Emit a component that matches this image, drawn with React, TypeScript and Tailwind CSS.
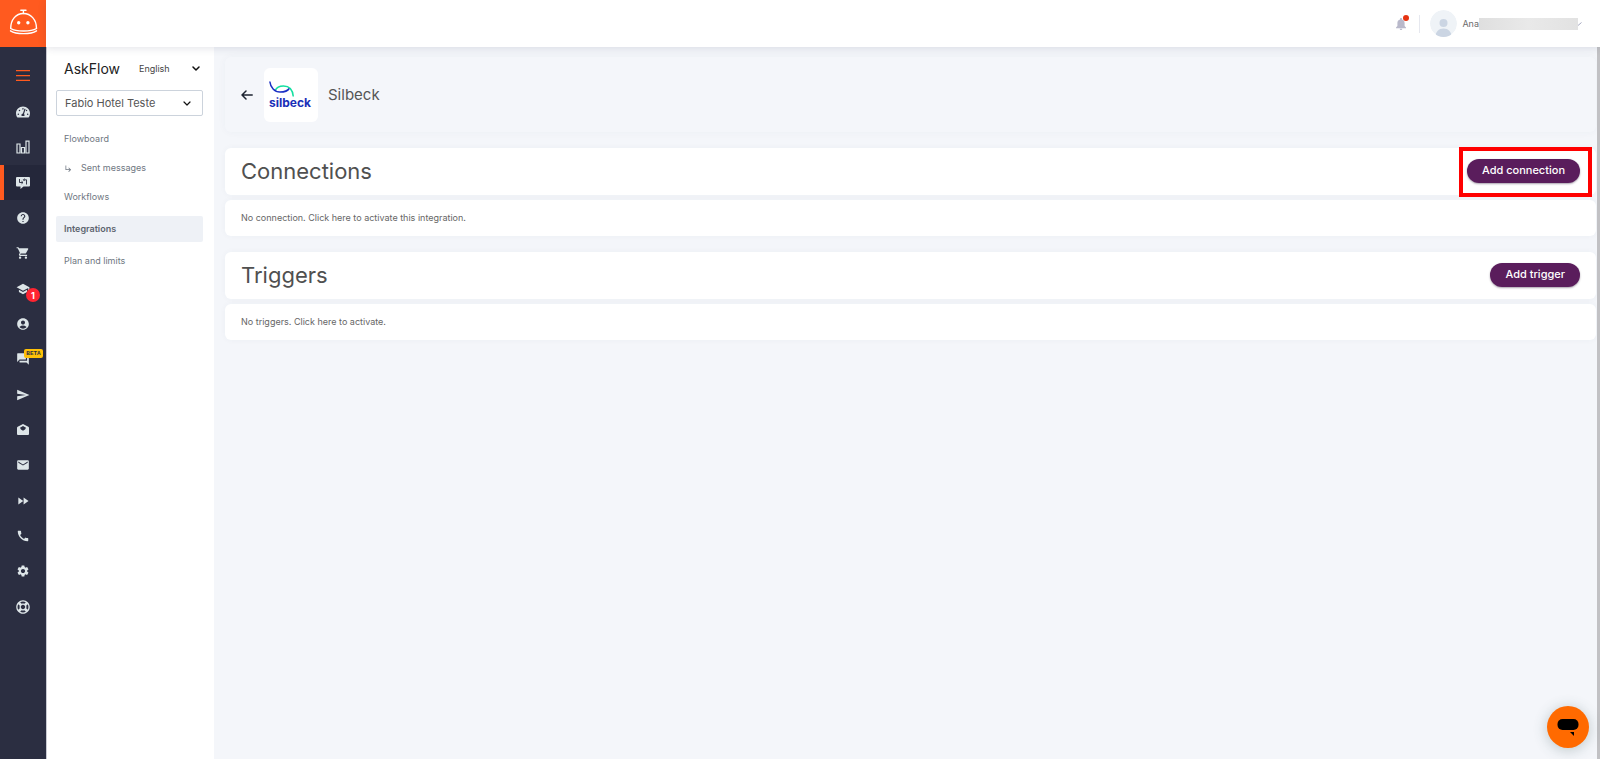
import React from "react";
import { FaTachometerAlt, FaRegLifeRing } from "react-icons/fa";
import {
  MdHelp,
  MdShoppingCart,
  MdSchool,
  MdAccountCircle,
  MdForum,
  MdSend,
  MdEmail,
  MdFastForward,
  MdCall,
  MdSettings,
  MdSubdirectoryArrowRight,
} from "react-icons/md";

function BellhopLogo() {
  return (
    <svg viewBox="0 0 46 46" className="size-[46px]" fill="none" stroke="#fff" strokeWidth="1.4" strokeLinecap="round">
      <path d="M20.800 10.200h5.200M23.400 10.500v3" />
      <path d="M10.700 28.500C10.700 19.500 16 13.500 23.400 13.500S36.500 19.500 36.500 28.500C31 31.800 16 31.800 10.700 28.500z" />
      <path d="M10.500 30.800c5.500 3.700 20.500 3.700 26 0" />
      <circle cx="18.700" cy="22.800" r="1.700" fill="#fff" stroke="none" />
      <circle cx="27.900" cy="22.800" r="1.700" fill="#fff" stroke="none" />
    </svg>
  );
}

function BarsIcon() {
  return (
    <svg viewBox="0 0 14 14" className="size-3.5" fill="none" stroke="currentColor" strokeWidth="1.200">
      <path d="M1 4h3v9H1zM5.500 7.500h3V13h-3zM10 1.200h3V13h-3z" />
    </svg>
  );
}

function FlowIcon() {
  return (
    <svg viewBox="0 0 14 12" className="h-3 w-3.5">
      <path d="M1 0h12a1 1 0 0 1 1 1v7.500a1 1 0 0 1-1 1H7.500L4.500 12V9.500H1a1 1 0 0 1-1-1V1a1 1 0 0 1 1-1z" fill="currentColor" />
      <path d="M3.500 2v3.500h3.200M5.500 4.200l1.500 1.300-1.500 1.300M7.500 2.800h3V7.500M8.600 1.700L7.400 2.800l1.200 1.200" fill="none" stroke="#24273a" strokeWidth="0.900" />
    </svg>
  );
}

function OpenMailIcon() {
  return (
    <svg viewBox="0 0 12 11" className="h-[11px] w-3">
      <path d="M6 0l5.300 2.700c.400.200.700.600.700 1.100V10a1 1 0 0 1-1 1H1a1 1 0 0 1-1-1V3.800c0-.500.300-.900.700-1.100z" fill="currentColor" />
      <path d="M6 1.900L9 3.700 8 5.500 6 6.700 4 5.500 3 3.700z" fill="#2b2e41" />
    </svg>
  );
}

function Chevron({ className }: { className: string }) {
  return (
    <svg viewBox="0 0 8 5" className={className} fill="none" stroke="#111" strokeLinecap="round" strokeLinejoin="round">
      <path d="M1 1l3 3 3-3" />
    </svg>
  );
}

type RailItem = { label: string; icon: React.ReactNode; active?: boolean; badge?: "count" | "beta" };

const railGroups: RailItem[][] = [
  [
    { label: "Dashboard", icon: <FaTachometerAlt className="size-3.5" /> },
    { label: "Reports", icon: <BarsIcon /> },
  ],
  [
    { label: "AskFlow", icon: <FlowIcon />, active: true },
    { label: "Questions", icon: <MdHelp className="size-3.5" /> },
    { label: "Store", icon: <MdShoppingCart className="size-3.5" /> },
  ],
  [
    { label: "Academy", icon: <MdSchool className="size-3.5" />, badge: "count" },
    { label: "Account", icon: <MdAccountCircle className="size-3.5" /> },
    { label: "Chat", icon: <MdForum className="size-3.5" />, badge: "beta" },
  ],
  [
    { label: "Send", icon: <MdSend className="size-3.5" /> },
    { label: "Read mail", icon: <OpenMailIcon /> },
    { label: "Mail", icon: <MdEmail className="size-3.5" /> },
  ],
  [
    { label: "Automation", icon: <MdFastForward className="size-3.5" /> },
    { label: "Calls", icon: <MdCall className="size-3.5" /> },
    { label: "Settings", icon: <MdSettings className="size-3.5" /> },
  ],
  [{ label: "Support", icon: <FaRegLifeRing className="size-3.5" /> }],
];

function Rail() {
  return (
    <aside className="flex w-[46px] shrink-0 flex-col bg-[#2b2e41]">
      <a href="#home" aria-label="Home" className="block h-[47px] bg-[#ff5a1f]">
        <BellhopLogo />
      </a>
      <button aria-label="Menu" className="flex h-[47px] items-center justify-center pt-2.5">
        <svg viewBox="0 0 14 11" className="h-[11px] w-3.5" fill="#ff5a1f">
          <path d="M0 0h14v1.300H0zM0 4.900h14v1.300H0zM0 9.700h14V11H0z" />
        </svg>
      </button>
      <nav className="flex flex-col gap-px text-[#dde5e8]">
        {railGroups.map((group, i) => (
          <div key={i}>
            {group.map((item) => (
              <a
                key={item.label}
                href={"#" + item.label.toLowerCase().replace(" ", "-")}
                aria-label={item.label}
                className={
                  item.active
                    ? "relative flex h-[35px] items-center justify-center border-l-4 border-[#ff5a1f] bg-[#24273a] pr-1"
                    : "relative flex h-[35px] items-center justify-center"
                }
              >
                {item.icon}
                {item.badge === "count" && (
                  <span className="absolute top-[17px] left-[26px] flex size-3.5 items-center justify-center rounded-full bg-[#ff2431] text-[9px] leading-none font-bold text-white">
                    1
                  </span>
                )}
                {item.badge === "beta" && (
                  <span className="absolute top-2 left-6 flex h-[9px] w-[19px] items-center justify-center rounded-xs bg-[#ffc107] font-['Liberation_Mono',monospace] text-[6px] leading-none font-bold text-[#2b2e41]">
                    BETA
                  </span>
                )}
              </a>
            ))}
          </div>
        ))}
      </nav>
    </aside>
  );
}

function TopBar() {
  return (
    <header className="relative z-10 flex h-[47px] shrink-0 items-center justify-end bg-white pr-[18px] shadow-[0_1px_8px_rgba(40,50,80,0.14)]">
      <button aria-label="Notifications" className="relative flex size-4 items-center justify-center">
        <svg viewBox="0 0 10 12" className="h-3 w-2.5" fill="#b9b9cb">
          <path d="M5 0c.600 0 1 .400 1 1v.500C7.700 2 8.600 3.300 8.600 5v3L10 9.500v.700H0v-.700L1.400 8V5C1.400 3.300 2.300 2 4 1.500V1c0-.600.400-1 1-1zM3.700 10.700h2.600C6.300 11.500 5.700 12 5 12s-1.300-.500-1.300-1.300z" />
        </svg>
        <span className="absolute -top-px right-0 size-1.5 rounded-full bg-[#e63312]" />
      </button>
      <span className="mr-2.5 ml-2.5 h-[18px] w-px bg-[#e6e8ef]" />
      <svg viewBox="0 0 27 27" className="size-[27px] overflow-hidden rounded-full">
        <circle cx="13.500" cy="13.500" r="13.500" fill="#eff3f7" />
        <circle cx="13.500" cy="13" r="4" fill="#cbd5e3" />
        <path d="M5.500 27c0-5.500 3.300-8.500 8-8.500s8 3 8 8.500z" fill="#cbd5e3" />
      </svg>
      <span className="ml-[5px] text-[9px] text-[#6b6b6b]">Ana</span>
      <span className="h-3 w-[99px] bg-linear-to-r from-[#dfdfdf] via-[#e9e9e9] to-[#e2e2e2]" />
      <svg viewBox="0 0 4 4" className="size-1" fill="none" stroke="#a6a8c0">
        <path d="M0 3.500L3.500.500" />
      </svg>
    </header>
  );
}

function SidePanel() {
  const link = "flex items-center px-2 text-[9px] leading-[14px] text-[#6f7782]";
  return (
    <aside className="flex w-[168px] shrink-0 flex-col border-l border-[#c9cad2] bg-white pr-[11px] pl-[9px]">
      <div className="flex h-[43px] items-center justify-between pr-[3px] pl-2">
        <h1 className="text-[14px] text-[#222]">AskFlow</h1>
        <div className="relative flex items-center">
          <select aria-label="Language" className="w-[61px] appearance-none bg-transparent text-[9px] text-[#444]">
            <option>English</option>
          </select>
          <Chevron className="pointer-events-none absolute right-0 h-[5px] w-2 stroke-[1.5]" />
        </div>
      </div>
      <div className="relative flex items-center">
        <select
          aria-label="Hotel"
          className="h-[26px] w-full appearance-none rounded-xs border border-[#ccd3dc] bg-white px-2 text-[11px] text-[#555]"
        >
          <option>Fabio Hotel Teste</option>
        </select>
        <Chevron className="pointer-events-none absolute right-3 h-[5px] w-2 stroke-[1.2]" />
      </div>
      <nav className="mt-4 flex flex-col">
        <a href="#flowboard" className={link}>Flowboard</a>
        <a href="#sent" className={link + " mt-[15px] gap-2"}>
          <MdSubdirectoryArrowRight className="size-[9px]" />
          Sent messages
        </a>
        <a href="#workflows" className={link + " mt-[15px]"}>Workflows</a>
        <a
          href="#integrations"
          aria-current="page"
          className="mt-3 flex h-[26px] items-center rounded-xs bg-[#eef1f6] px-2 text-[9px] font-semibold text-[#5d6570]"
        >
          Integrations
        </a>
        <a href="#plan" className={link + " mt-3"}>Plan and limits</a>
      </nav>
    </aside>
  );
}

function SilbeckLogo() {
  return (
    <div className="flex size-[54px] flex-col justify-center rounded-md bg-white pl-[5px]">
      <svg viewBox="0 0 26 16" className="h-4 w-[26px]" fill="none" strokeWidth="1.500">
        <path d="M6.300 9.500C7.500 6.500 11 5 14.500 5c5.500 0 9.200 3.500 9.800 10.500" stroke="#14e0a0" />
        <path d="M.800.500C1.500 6.500 5.500 11 11 11c4.500 0 8-1.500 9.200-3.500" stroke="#1a2fc4" />
      </svg>
      <span className="text-[12px] leading-3 font-bold text-[#1a2fb8]">silbeck</span>
    </div>
  );
}

const pill =
  "h-6 rounded-full bg-[#5a1d5c] px-[15px] text-[11px] font-medium text-white shadow-[0_1px_2px_rgba(40,20,50,0.4)]";

function Section(props: { title: string; action: string; message: string; highlighted?: boolean }) {
  return (
    <section className="mt-4 flex flex-col gap-[5px]">
      <div className="flex h-[47px] items-center justify-between rounded-md bg-white px-4 pb-0.5 shadow-[0_0_6px_rgba(60,70,110,0.04)]">
        <h2 className="text-[22px] leading-7 text-[#505050]">{props.title}</h2>
        <div className="relative flex">
          <button className={pill}>{props.action}</button>
          {props.highlighted && (
            <span className="pointer-events-none absolute -top-3 -right-3 -bottom-3.5 -left-2 border-4 border-[#ff0000]" />
          )}
        </div>
      </div>
      <p className="flex h-9 items-center rounded-md bg-white px-4 text-[9px] text-[#666] shadow-[0_0_6px_rgba(60,70,110,0.04)]">
        {props.message}
      </p>
    </section>
  );
}

export default function App() {
  return (
    <div className="flex min-h-screen bg-[#f4f6fa] font-[Inter,sans-serif]">
      <Rail />
      <div className="flex min-w-0 flex-1 flex-col">
        <TopBar />
        <div className="flex flex-1">
          <SidePanel />
          <main className="min-w-0 flex-1 pt-2.5 pr-px pl-[11px]">
            <div className="flex h-[75px] items-center rounded-md px-4 shadow-[0_0_8px_rgba(60,70,110,0.04)]">
              <button aria-label="Back">
                <svg viewBox="0 0 12 10" className="h-2.5 w-3" fill="none" stroke="#1c2330" strokeWidth="1.500" strokeLinecap="round" strokeLinejoin="round">
                  <path d="M11.200 5H1M5 1L1 5l4 4" />
                </svg>
              </button>
              <div className="mr-2.5 ml-[11px]">
                <SilbeckLogo />
              </div>
              <span className="text-[15px] leading-5 text-[#555]">Silbeck</span>
            </div>
            <Section title="Connections" action="Add connection" message="No connection. Click here to activate this integration." highlighted />
            <Section title="Triggers" action="Add trigger" message="No triggers. Click here to activate." />
          </main>
          <div className="w-[3px] shrink-0 bg-[#c1c1c4]" />
        </div>
      </div>
      <button
        aria-label="Open chat"
        className="fixed right-[11px] bottom-[11px] flex size-[42px] items-center justify-center rounded-full bg-[#ff6a00] shadow-[0_2px_14px_rgba(60,90,90,0.3)]"
      >
        <svg viewBox="0 0 22 17" className="h-[17px] w-[22px]">
          <rect x="0.500" y="0" width="21" height="11" rx="5" fill="#000" />
          <path d="M13 13h4v4z" fill="#000" />
        </svg>
      </button>
    </div>
  );
}
